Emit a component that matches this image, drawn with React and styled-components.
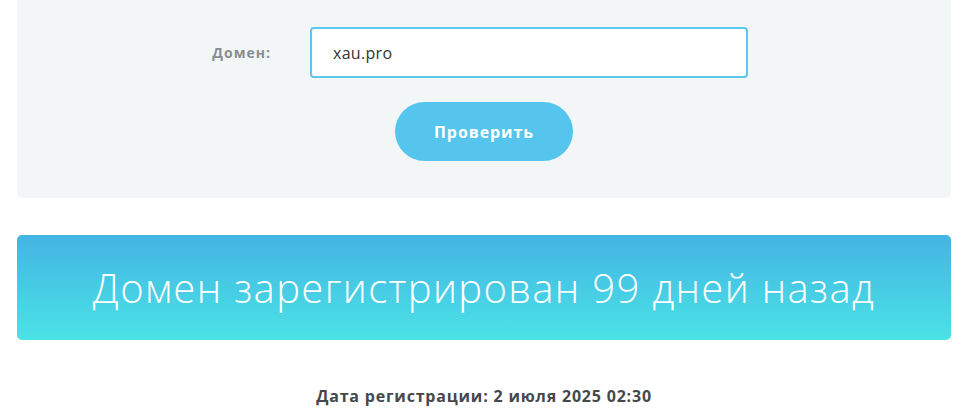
import React from 'react';
import styled, { createGlobalStyle } from 'styled-components';

const GlobalStyle = createGlobalStyle`
  html, body {
    margin: 0;
    background: #fff;
    font-family: 'Open Sans', 'Noto Sans', sans-serif;
  }
`;

const Page = styled.div`
  padding: 0 23px 0 17px;
  display: flex;
  flex-direction: column;
`;

const Panel = styled.div`
  background: #f3f6f7;
  border-radius: 0 0 6px 6px;
  padding: 27px 0 37px;
  display: flex;
  flex-direction: column;
  align-items: center;
  gap: 24px;
`;

const FormRow = styled.div`
  align-self: stretch;
  display: grid;
  grid-template-columns: 293px 438px;
  align-items: center;
`;

const Label = styled.label`
  justify-self: end;
  padding-right: 39px;
  font-size: 14px;
  font-weight: 700;
  letter-spacing: 1px;
  color: #8a8d90;
`;

const Input = styled.input`
  box-sizing: border-box;
  height: 51px;
  width: 100%;
  border: 2px solid #5bc6ee;
  border-radius: 4px;
  background: #fff;
  padding: 0 21px;
  font-family: inherit;
  font-size: 16px;
  letter-spacing: 0.3px;
  color: #333;
  outline: none;
`;

const Button = styled.button`
  width: 178px;
  height: 59px;
  border: none;
  border-radius: 30px;
  background: #55c5ed;
  color: #fff;
  font-family: inherit;
  font-size: 16px;
  font-weight: 700;
  letter-spacing: 0.9px;
  cursor: pointer;
`;

const Banner = styled.div`
  margin-top: 37px;
  height: 105px;
  border-radius: 5px;
  background: linear-gradient(180deg, #44b4e3 0%, #4ae3e6 100%);
  display: flex;
  align-items: center;
  justify-content: center;
  color: #fff;
  font-size: 40px;
  font-weight: 300;
  letter-spacing: 1.35px;
`;

const Info = styled.p`
  margin: 46px 0 0;
  text-align: center;
  font-size: 16px;
  font-weight: 700;
  letter-spacing: 0.8px;
  color: #45484c;
  line-height: 20px;
`;

export default function App() {
  return (
    <>
      <GlobalStyle />
      <Page>
        <Panel>
          <FormRow>
            <Label htmlFor="domain">Домен:</Label>
            <Input id="domain" type="text" defaultValue="xau.pro" />
          </FormRow>
          <Button type="button">Проверить</Button>
        </Panel>
        <Banner>Домен зарегистрирован 99 дней назад</Banner>
        <Info>Дата регистрации: 2 июля 2025 02:30</Info>
      </Page>
    </>
  );
}
